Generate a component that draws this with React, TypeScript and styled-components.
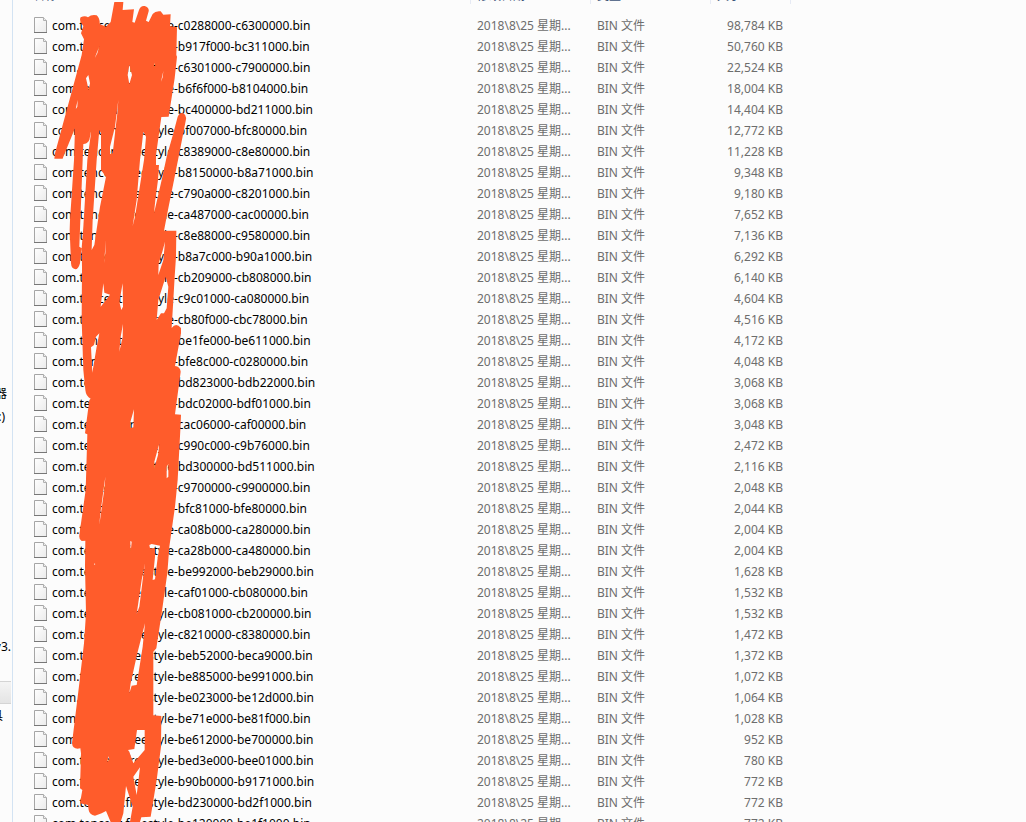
import React from "react";
import styled, { createGlobalStyle } from "styled-components";

const GlobalStyle = createGlobalStyle`
  *, *::before, *::after { box-sizing: border-box; }
  html, body, #root { height: 100%; }
  body {
    margin: 0;
    overflow: hidden;
    background: #fcfcfc;
    font-family: "Noto Sans", "Noto Sans CJK SC", sans-serif;
    font-size: 12px;
    line-height: 20px;
    color: #000;
  }
`;

const Explorer = styled.div`
  display: flex;
  height: 100vh;
  overflow: hidden;
`;

const Sidebar = styled.nav`
  flex: 0 0 13px;
  display: flex;
  flex-direction: column;
  padding-top: 384px;
  border-right: 1px solid #d3e3f3;
  overflow: hidden;
`;

const SideItem = styled.a<{ $inset: number; $after?: number }>`
  flex: none;
  display: flex;
  justify-content: flex-end;
  height: 20px;
  margin-bottom: ${(p) => p.$after ?? 0}px;
  padding-right: ${(p) => p.$inset}px;
  color: #000;
  white-space: nowrap;
  text-decoration: none;
`;

const SideSection = styled.div`
  flex: none;
  height: 23px;
  margin: 0 1px 2px 0;
  border: solid #d4d4d4;
  border-width: 1px 0;
  background: linear-gradient(#f4f4f4, #e4e4e4);
`;

const Content = styled.main`
  position: relative;
  flex: 1;
  min-width: 0;
`;

const FileTable = styled.table`
  table-layout: fixed;
  width: 100%;
  border-collapse: collapse;
`;

const Column = styled.col<{ $width?: number }>`
  width: ${(p) => (p.$width ? `${p.$width}px` : "auto")};
`;

const HeadCell = styled.th`
  height: 16px;
  padding: 0;
  vertical-align: top;
  text-align: left;
  font-weight: 400;
  color: #3c5478;
`;

const HeadLabel = styled.div<{ $first?: boolean }>`
  display: flex;
  align-items: flex-end;
  height: 4px;
  padding-left: ${(p) => (p.$first ? 20 : 6)}px;
  border-left: ${(p) => (p.$first ? "none" : "1px solid #e6eaf4")};
  overflow: hidden;
  line-height: 16px;
`;

const Cell = styled.td<{ $align?: "right" }>`
  height: 21px;
  padding: 0 7px;
  color: #6d6d6d;
  text-align: ${(p) => p.$align ?? "left"};
  vertical-align: top;
  white-space: nowrap;
  overflow: hidden;
  text-overflow: ellipsis;
`;

const NameCell = styled(Cell)`
  padding-left: 21px;
  color: #000;
`;

const FileName = styled.div`
  display: flex;
  align-items: flex-start;
  gap: 5px;
  height: 20px;
`;

const Icon = styled.svg`
  flex: none;
  width: 13px;
  height: 16px;
  margin-top: 1px;
`;

const Scribble = styled.svg`
  position: absolute;
  top: 0;
  left: -13px;
  width: 200px;
  height: 822px;
  pointer-events: none;
`;

const files: [string, string][] = [
  ["c0288000-c6300000", "98,784"],
  ["b917f000-bc311000", "50,760"],
  ["c6301000-c7900000", "22,524"],
  ["b6f6f000-b8104000", "18,004"],
  ["bc400000-bd211000", "14,404"],
  ["bf007000-bfc80000", "12,772"],
  ["c8389000-c8e80000", "11,228"],
  ["b8150000-b8a71000", "9,348"],
  ["c790a000-c8201000", "9,180"],
  ["ca487000-cac00000", "7,652"],
  ["c8e88000-c9580000", "7,136"],
  ["b8a7c000-b90a1000", "6,292"],
  ["cb209000-cb808000", "6,140"],
  ["c9c01000-ca080000", "4,604"],
  ["cb80f000-cbc78000", "4,516"],
  ["be1fe000-be611000", "4,172"],
  ["bfe8c000-c0280000", "4,048"],
  ["bd823000-bdb22000", "3,068"],
  ["bdc02000-bdf01000", "3,068"],
  ["cac06000-caf00000", "3,048"],
  ["c990c000-c9b76000", "2,472"],
  ["bd300000-bd511000", "2,116"],
  ["c9700000-c9900000", "2,048"],
  ["bfc81000-bfe80000", "2,044"],
  ["ca08b000-ca280000", "2,004"],
  ["ca28b000-ca480000", "2,004"],
  ["be992000-beb29000", "1,628"],
  ["caf01000-cb080000", "1,532"],
  ["cb081000-cb200000", "1,532"],
  ["c8210000-c8380000", "1,472"],
  ["beb52000-beca9000", "1,372"],
  ["be885000-be991000", "1,072"],
  ["be023000-be12d000", "1,064"],
  ["be71e000-be81f000", "1,028"],
  ["be612000-be700000", "952"],
  ["bed3e000-bee01000", "780"],
  ["b90b0000-b9171000", "772"],
  ["bd230000-bd2f1000", "772"],
  ["be120000-be1f1000", "772"],
];

// Outline of the marker first, then the gaps left between its strokes.
const marker = `
M343 6L370 6L368 30L402 28L397 66L404 68L417 30Q422 16 434 18Q448 22 446 34L438 62L446 66L458 42Q466 32 482 34L490 44L512 43L510 78L531 82L529 165L531 170L524 235L506 350L484 351L468 465L468 495L477 495L474 540L466 600L462 640L485 540L500 470L520 400L533 350Q540 336 550 340Q560 346 558 358L540 450L530 500L518 560L505 625L492 692L529 692L528 770L524 830L520 900L515 984Q528 966 543 984L543 1000L525 1098Q541 1100 542 1115L525 1243L543 1244L541 1290L533 1440L525 1520L508 1640L502 1720L485 1840L469 1945L460 1955L460 2146L484 2148L483 2240L470 2340L452 2450L424 2452L420 2466L390 2466L398 2420L378 2358L370 2440L362 2466L332 2466L318 2433L305 2440L285 2447Q268 2444 266 2430L264 2415L240 2410L247 2370L240 2365L243 2260L241 2245Q218 2250 216 2230L238 2050L252 1930L258 1840L255 1700L256 1622L245 1623Q236 1618 238 1605L257 1470L262 1303L255 1300L268 1200L272 1196Q258 1190 256 1170L250 1110L245 960L246 800L245 745L240 790Q235 808 226 808Q214 806 213 790L209 690L210 660L222 480L225 385L190 470L188 476L163 476L165 460L245 165L252 118L243 100L250 78Q236 62 242 52Q255 45 264 52Q275 42 290 46Q300 55 299 72L318 80L332 66Z
M275 385L268 420Q262 432 250 432L248 480L238 740L245 745L250 680L262 480Z
M298 390L290 480L278 660L275 750L283 735L300 620L318 530L303 510L303 400Z
M355 300L345 380L330 440L330 462L338 460L352 340Z
M430 395L425 440L420 480L410 600L398 678L405 650L432 480L438 410Z
M265 225L270 250L266 270L258 235Z M388 195L396 225L388 252L383 225Z
M298 138L292 160L284 175Z M462 190L466 196L462 201Z M490 213L488 232L483 245Z M233 300L232 320L227 328Z
M495 725L490 780L475 825L476 790L487 755Z
M497 830L505 860L500 925L492 940L483 940L470 960L475 900Z
M318 720L316 760L312 790Z M310 850L313 878L330 884L318 900L302 920Z M368 850L369 920L364 930L358 905Z
M298 1000L290 1040L277 1118L273 1042L282 1035L288 1010Z M369 972L368 1010L358 1055L362 1010Z
M402 1228L400 1282L390 1285L390 1270Z M478 1330L474 1365L462 1407L463 1385Z M505 1392L505 1430L500 1435L500 1400Z
M316 1430L314 1460L298 1575L301 1540Z M391 1623L395 1625L392 1655Z M283 1690L286 1692L283 1696Z
M448 1635L455 1632L480 1637L474 1665L465 1738L458 1740L465 1670L465 1645L450 1645Z
M435 1690L428 1740L418 1820L410 1842L425 1740Z
M435 1870L428 1940L410 2055L395 2057L388 2080L392 2050L412 1960Z
M411 2190L434 2190L434 2250L400 2290L388 2255L384 2250L403 2247Z
M420 2302L415 2345L410 2385L400 2330Z M326 2268L328 2280L322 2285Z
`;

function PageIcon() {
  return (
    <Icon viewBox="0 0 13 16" aria-hidden="true">
      <defs>
        <linearGradient id="sheet" x1="0" y1="0" x2="1" y2="1">
          <stop offset="0" stopColor="#fff" />
          <stop offset="1" stopColor="#ebebeb" />
        </linearGradient>
      </defs>
      <path d="M.5 .5H9.5L12.5 3.5V15.5H.5Z" fill="url(#sheet)" stroke="#a6a6a6" />
      <path d="M9.5 .5V3.5H12.5" fill="#eee" stroke="#b0b0b0" />
      <path d="M0 15.5H13" stroke="#777" />
    </Icon>
  );
}

export default function App() {
  return (
    <>
      <GlobalStyle />
      <Explorer>
        <Sidebar aria-label="导航">
          <SideItem href="#browser" $inset={5} $after={3}>浏览器</SideItem>
          <SideItem href="#drive" $inset={7} $after={210}>(C:)</SideItem>
          <SideItem href="#version" $inset={1} $after={24}>v3.</SideItem>
          <SideSection />
          <SideItem href="#tools" $inset={9}>工具</SideItem>
        </Sidebar>
        <Content>
          <FileTable>
            <colgroup>
              <Column $width={457} />
              <Column $width={120} />
              <Column $width={120} />
              <Column $width={80} />
              <Column />
            </colgroup>
            <thead>
              <tr>
                <HeadCell><HeadLabel $first>名称</HeadLabel></HeadCell>
                <HeadCell><HeadLabel>修改日期</HeadLabel></HeadCell>
                <HeadCell><HeadLabel>类型</HeadLabel></HeadCell>
                <HeadCell><HeadLabel>大小</HeadLabel></HeadCell>
                <HeadCell as="td"><HeadLabel /></HeadCell>
              </tr>
            </thead>
            <tbody>
              {files.map(([range, size]) => (
                <tr key={range}>
                  <NameCell>
                    <FileName>
                      <PageIcon />
                      com.tencent.freestyle-{range}.bin
                    </FileName>
                  </NameCell>
                  <Cell>2018\8\25 星期...</Cell>
                  <Cell>BIN 文件</Cell>
                  <Cell $align="right">{size} KB</Cell>
                  <td />
                </tr>
              ))}
            </tbody>
          </FileTable>
          <Scribble viewBox="0 0 600 2466" aria-hidden="true">
            <path d={marker} fill="#ff5c2b" fillRule="evenodd" />
          </Scribble>
        </Content>
      </Explorer>
    </>
  );
}
